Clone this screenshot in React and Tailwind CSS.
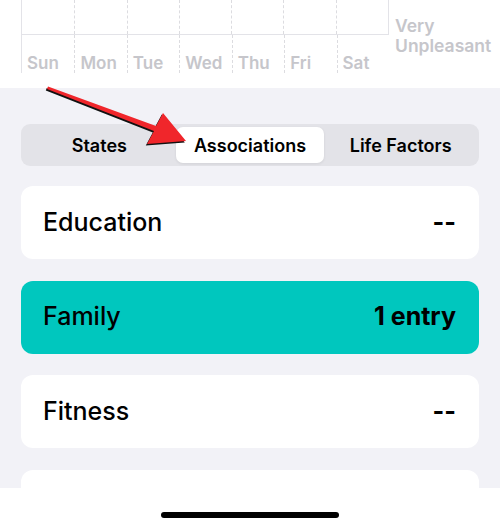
import React from 'react';

const days = ['Sun', 'Mon', 'Tue', 'Wed', 'Thu', 'Fri', 'Sat'];

const rows = [
  { name: 'Education', value: '--', active: false },
  { name: 'Family', value: '1 entry', active: true },
  { name: 'Fitness', value: '--', active: false },
  { name: '', value: '', active: false },
];

const Row = ({ name, value, active }) => (
  <div
    className={`shrink-0 h-[73px] rounded-[12px] flex items-center justify-between pl-[22px] pr-[23px] text-black ${
      active ? 'bg-[#00c7be]' : 'bg-white'
    }`}
  >
    <span className="text-[25px] font-medium">{name}</span>
    <span className="text-[25px] font-bold">{value}</span>
  </div>
);

export default function App() {
  return (
    <div className="relative w-[500px] h-[529px] overflow-hidden bg-white" style={{ fontFamily: 'Inter, "Liberation Sans", sans-serif' }}>
      {/* Chart tail */}
      <div className="h-[88px] bg-white flex">
        <div className="ml-[21px] w-[368px] flex flex-col">
          <div className="h-[35px] grid grid-cols-7 border-l border-r border-b border-[#e3e3e8]">
            {days.map((d, i) => (
              <div key={d} className={i === 0 ? '' : 'border-l border-dashed border-[#dcdce0]'} />
            ))}
          </div>
          <div className="h-[38px] grid grid-cols-7 border-l border-[#e3e3e8]">
            {days.map((d, i) => (
              <div
                key={d}
                className={`flex items-end pl-[5px] text-[17px] leading-[20px] font-semibold text-[#c6c6cb] ${
                  i === 0 ? '' : 'border-l border-dashed border-[#dcdce0]'
                }`}
              >
                {d}
              </div>
            ))}
          </div>
        </div>
        <div className="pl-[6px] pt-[16px] text-[17.5px] leading-[20px] font-semibold text-[#c6c6cb]">
          <div>Very</div>
          <div>Unpleasant</div>
        </div>
      </div>

      {/* Gray section */}
      <div className="h-[400px] bg-[#f2f2f7] px-[21px] pt-[36px] flex flex-col overflow-hidden">
        <div className="h-[42px] shrink-0 rounded-[9px] bg-[#e3e3e8] p-[3px] grid grid-cols-3 text-[18px] font-semibold text-black">
          <div className="flex items-center justify-center">States</div>
          <div className="flex items-center justify-center bg-white rounded-[7px] mx-[1px] shadow-[0_1px_3px_rgba(0,0,0,0.08)]">Associations</div>
          <div className="flex items-center justify-center">Life Factors</div>
        </div>
        <div className="mt-[20px] flex flex-col gap-[21.5px]">
          {rows.map((r, i) => (
            <Row key={i} {...r} />
          ))}
        </div>
      </div>

      {/* Home indicator */}
      <div className="h-[41px] bg-white flex justify-center pt-[24px]">
        <div className="w-[178px] h-[6px] rounded-full bg-black" />
      </div>

      {/* Annotation arrow */}
      <svg className="absolute left-0 top-0 pointer-events-none" width="500" height="529" viewBox="0 0 500 529">
        <polygon
          points="48,86.5 156,126 163,113 186,141 147,144 154,131 47,89"
          fill="#111"
          transform="translate(-1.2,1.6)"
        />
        <polygon points="48,86.5 156,126 163,113 186,141 147,144 154,131 47,89" fill="#f0262b" />
      </svg>
    </div>
  );
}
